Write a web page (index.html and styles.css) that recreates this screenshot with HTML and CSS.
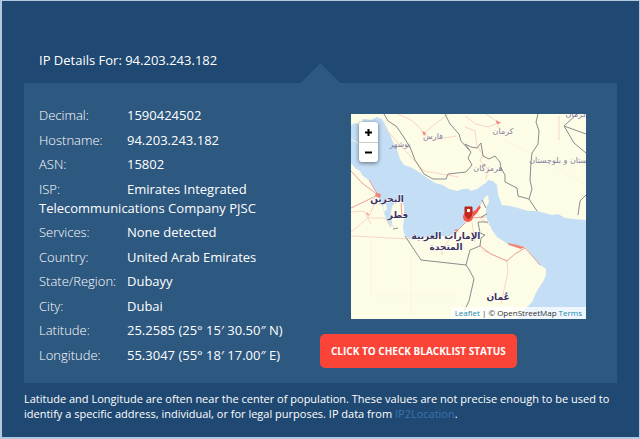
FILE: index.html
```html
<!DOCTYPE html>
<html lang="en">
<head>
<meta charset="utf-8">
<meta name="viewport" content="width=device-width, initial-scale=1">
<title>IP Details</title>
<link rel="stylesheet" href="styles.css">
</head>
<body>
<main class="page">
  <h1 class="title">IP Details For: 94.203.243.182</h1>
  <section class="panel">
    <dl class="details">
      <div class="row"><dt>Decimal:</dt><dd>1590424502</dd></div>
      <div class="row"><dt>Hostname:</dt><dd>94.203.243.182</dd></div>
      <div class="row"><dt>ASN:</dt><dd>15802</dd></div>
      <div class="row"><dt>ISP:</dt><dd>Emirates Integrated Telecommunications Company PJSC</dd></div>
      <div class="row"><dt>Services:</dt><dd>None detected</dd></div>
      <div class="row"><dt>Country:</dt><dd>United Arab Emirates</dd></div>
      <div class="row"><dt>State/Region:</dt><dd>Dubayy</dd></div>
      <div class="row"><dt>City:</dt><dd>Dubai</dd></div>
      <div class="row"><dt>Latitude:</dt><dd>25.2585 (25° 15′ 30.50″ N)</dd></div>
      <div class="row"><dt>Longitude:</dt><dd>55.3047 (55° 18′ 17.00″ E)</dd></div>
    </dl>
    <div class="side">
      <div class="map">
        <svg class="tiles" viewBox="0 0 235 205" role="img" aria-label="Map of the Persian Gulf">
          <rect class="land" width="235" height="205"/>
          <!-- Gulf and Arabian Sea -->
          <path class="sea" d="M0 11L5 9 10 11 12 5 20 6 26 3 31 5 36 14 40 23 43 31 46 36 49 45 53 51 59 53 65 56 72 61 78 65 84 69 92 71 98 75 106 77 112 75 118 75 126 71 134 70 137 66 142 67 146 71 147 81 151 91 159 92 167 94 177 97 186 97 201 101 207 100 214 104 223 105 235 106V205H166L174 195 181 188 184 181 187 175 192 168 195 161 195 155 189 151 183 144 174 133 166 131 157 130 146 123 141 116 138 109 135 103 135 94 138 88 137 81 134 83 130 90 128 95 122 98 117 103 112 111 106 117 100 122 89 122 78 124 68 123 62 126 57 124 53 120 52 113 53 104 53 92 50 87 46 87 41 92 40 99 41 108 40 114 36 108 34 102 32 94 29 87 27 81 22 73 19 67 12 62 9 57 4 54 0 49Z"/>
          <path class="land" d="M32 91l3-1 1 5-3 3zM118 74l11-4 4 0-7 5-7 2zM166 193l2-3 2 0-2 4zM176 189l2-3 1 3-2 3z"/>
          <!-- Roads -->
          <path class="road" d="M47 0L60 6 67 12 73 19 84 10 91 5 97 0M73 19L82 26 105 22M32 12L47 29 59 42 73 57 108 63M114 13L124 17 126 32 132 40 129 47 137 55 135 65M114 2L125 10 137 13 150 8M135 0L145 7 148 14M208 2V26M0 118L17 104 20 98 27 81M17 104H33L43 113M0 122L59 125M102 120L91 136V141M131 136L140 140 156 147 157 158 150 190M139 111L130 105 125 98M124 128L121 108M0 98L13 97 20 110"/>
          <path class="main-road" d="M0 57L11 69 27 81 0 94M18 66L27 81M104 119L112 111 118 105 129 91M156 147L164 140 174 134M157 130L165 131 174 134 183 144 189 151M50 89L51 102M129 132L140 140 156 147M120 104L134 103"/>
          <path class="district" d="M20 124V182H110M60 142V202M0 25L20 36M150 25L182 40 234 70"/>
          <!-- Borders -->
          <path class="border" d="M33 0L37 7 45 12 52 22 59 33 64 46 73 60 82 65 95 65 97 60 115 58 121 51 117 44 120 38 114 30 120 33 126 34 130 29 132 42 138 45 144 42 149 48 150 54 154 61 154 68 166 74 167 82 178 85 186 97M94 0L99 10 108 20 110 27 118 36M187 0L185 8 188 17 187 30 181 39 180 48 179 66 181 75 178 85M213 12L235 20M226 0L213 12 223 29 235 39M227 101L229 87 235 81M54 122L70 146 115 151 119 157 123 165 118 187 113 197M115 151L119 136 129 132 130 124 134 121 129 119 127 108 137 108M42 115L47 114M131 86L135 94M130 103L136 100"/>
          <!-- Urban area around the pin -->
          <path class="urban" d="M121 98l4-2 3-4 2 1-4 6-4 4z"/>
          <circle class="urban" cx="117" cy="103" r="5"/>
          <path class="city" d="M25 79l5 1-1 4-5-2zM157 129l16 4-3 2-12-4zM71 17l4 2-2 3zM145 6l5 3-4 1zM103 116l4-1-1 4zM15 98l3 2-1 2z"/>
          <g class="places" direction="rtl">
            <text x="49" y="33">بوشهر</text>
            <text x="82" y="25">فارس</text>
            <text x="152" y="20">کرمان</text>
            <text x="137" y="57">هرمزگان</text>
            <text x="212" y="49">سیستان و بلوچستان</text>
            <text x="225" y="3">کرمان</text>
          </g>
          <g class="countries" direction="rtl">
            <text x="36" y="88">البحرين</text>
            <text x="47" y="104">قطر</text>
            <text x="95" y="125">الإمارات العربية</text>
            <text x="95" y="136">المتحدة</text>
            <text x="147" y="186">عُمان</text>
          </g>
          <path class="pin" d="M114 93h7v6q0 2-1 3l-2.500 3-2.500-3q-1-1-1-3z"/>
          <rect class="pin-hole" x="116" y="95" width="3" height="3"/>
        </svg>
        <div class="zoom">
          <button type="button" class="zoom-button" aria-label="Zoom in"><svg viewBox="0 0 9 9"><path d="M1 4.500h7M4.500 1v7"/></svg></button>
          <button type="button" class="zoom-button" aria-label="Zoom out"><svg viewBox="0 0 9 9"><path d="M1 4.500h7"/></svg></button>
        </div>
        <p class="credit"><a href="#">Leaflet</a> | © OpenStreetMap <a href="#">Terms</a></p>
      </div>
      <button type="button" class="check">CLICK TO CHECK BLACKLIST STATUS</button>
    </div>
  </section>
  <p class="note">Latitude and Longitude are often near the center of population. These values are not precise enough to be used to identify a specific address, individual, or for legal purposes. IP data from <a href="#">IP2Location</a>.</p>
</main>
</body>
</html>
```
FILE: styles.css
```css
* {
  box-sizing: border-box;
}

body {
  margin: 0;
  background: #1f4972;
  color: #fff;
  font-family: "Open Sans", sans-serif;
}

.page {
  min-height: 100vh;
  padding: 49px 22px 0;
  border: 2px solid #b3c7df;
  border-top-width: 1px;
  border-right-width: 1px;
}

.title {
  margin: 0 0 13px;
  padding-left: 15px;
  font-size: 13px;
  font-weight: 400;
  line-height: 20px;
}

.panel {
  position: relative;
  display: grid;
  grid-template-columns: 281fr 266fr;
  padding: 23px 31px 15px 15px;
  background: #2d587f;
}

.panel::before {
  content: "";
  position: absolute;
  top: -20px;
  left: 50%;
  width: 40px;
  height: 20px;
  margin-left: -20px;
  background: #2d587f;
  clip-path: polygon(50% 0, 100% 100%, 0 100%);
}

.details {
  display: flex;
  flex-direction: column;
  justify-content: space-between;
  margin: 0 0 3px;
  font-size: 13px;
  line-height: 19px;
}

.row dt {
  display: inline-block;
  width: 88px;
  font-weight: 300;
}

.row dd {
  display: inline;
  margin: 0;
}

.side {
  padding-top: 8px;
}

.map {
  position: relative;
  margin: 0 0 15px 31px;
}

.tiles {
  display: block;
  width: 100%;
}

.land {
  fill: #fdfce7;
}

.sea {
  fill: #c3def5;
}

.road,
.main-road,
.district,
.border {
  fill: none;
  stroke-linejoin: round;
}

.road {
  stroke: #f8d6c4;
}

.main-road {
  stroke: #ec9f98;
}

.district {
  stroke: #f9f7e3;
}

.border {
  stroke: #8b8c8d;
}

.urban {
  fill: #f4564e;
}

.city {
  fill: #ef8279;
}

.places {
  fill: #85809f;
  font: 8px "DejaVu Sans", sans-serif;
  text-anchor: middle;
}

.countries {
  fill: #3c3260;
  stroke: #fffc;
  stroke-width: 1px;
  paint-order: stroke;
  font: bold 9px "DejaVu Sans", sans-serif;
  text-anchor: middle;
}

.pin {
  fill: #c8281a;
  stroke: #a82518;
}

.pin-hole {
  fill: #fff;
}

.zoom {
  position: absolute;
  top: 8px;
  left: 8px;
  width: 19px;
  border-radius: 3px;
  background: #fff;
  box-shadow: 0 1px 4px #0008;
}

.zoom-button {
  display: grid;
  place-items: center;
  width: 100%;
  height: 20px;
  padding: 0;
  border: 0;
  background: none;
}

.zoom-button + .zoom-button {
  border-top: 1px solid #ccc;
}

.zoom-button svg {
  width: 9px;
  height: 9px;
  fill: none;
  stroke: #000;
  stroke-width: 2px;
}

.credit {
  position: absolute;
  right: 0;
  bottom: 0;
  margin: 0;
  padding: 0 4px;
  background: #fffb;
  color: #333;
  font-size: 8px;
  line-height: 12px;
  white-space: nowrap;
}

.credit a {
  color: #168bac;
  text-decoration: none;
}

.check {
  padding: 0 11px;
  border: 0;
  border-radius: 5px;
  background: #f94437;
  color: #fff;
  font: bold 10px/34px "Open Sans", sans-serif;
  white-space: nowrap;
}

.note {
  margin: 8px 0 0;
  font-size: 11px;
  line-height: 15px;
}

.note a {
  color: #3a73ae;
  text-decoration: none;
}
```
